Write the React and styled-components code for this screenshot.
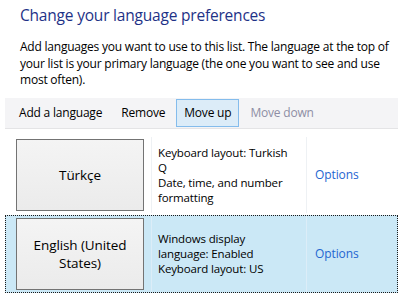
import React from "react";
import styled, { createGlobalStyle } from "styled-components";

const Global = createGlobalStyle`
  html, body { margin: 0; padding: 0; background: #ffffff; }
  body { font-family: "Open Sans", "Noto Sans", sans-serif; color: #000; }
`;

const Page = styled.div`
  width: 398px;
  height: 298px;
  overflow: hidden;
  padding-left: 5px;
  box-sizing: border-box;
`;

const Header = styled.div`
  padding: 4px 0 0 15px;
`;

const Title = styled.h1`
  margin: 0;
  font-weight: 400;
  font-size: 15.5px;
  line-height: 22px;
  color: #1e3287;
  letter-spacing: -0.2px;
`;

const Intro = styled.p`
  margin: 13px 0 0 0;
  font-size: 12px;
  line-height: 16.5px;
  letter-spacing: -0.22px;
  white-space: nowrap;
`;

const Toolbar = styled.div`
  margin-top: 9px;
  height: 31px;
  box-sizing: border-box;
  display: flex;
  align-items: center;
  gap: 3px;
  padding-left: 6px;
  background: #f4f4f6;
  border-bottom: 1px solid #e4e4e6;
`;

const ToolButton = styled.div`
  height: 28px;
  box-sizing: border-box;
  display: flex;
  align-items: center;
  padding: 0 7px;
  font-size: 12px;
  letter-spacing: -0.2px;
  border: 1px solid ${(p) => (p.$active ? "#84bcec" : "transparent")};
  background: ${(p) => (p.$active ? "#dcecf8" : "transparent")};
  color: ${(p) => (p.$disabled ? "#8e8ea4" : "#000")};
`;

const List = styled.div`
  margin-top: 7px;
  display: flex;
  flex-direction: column;
  gap: 1px;
`;

const Row = styled.div`
  height: 78px;
  box-sizing: border-box;
  display: flex;
  align-items: stretch;
  background: ${(p) => (p.$selected ? "#cbe8f6" : "transparent")};
  border: 1px ${(p) => (p.$selected ? "dotted #1a1a1a" : "solid transparent")};
`;

const LangCell = styled.div`
  padding: 2px 7px 2px 10px;
  display: flex;
  align-items: center;
`;

const LangButton = styled.div`
  width: 128px;
  height: 72px;
  box-sizing: border-box;
  border: 1px solid #737373;
  background: linear-gradient(#f4f4f4, #ebebeb);
  display: flex;
  align-items: center;
  justify-content: center;
  text-align: center;
  font-size: 13.5px;
  line-height: 18px;
  letter-spacing: -0.1px;
`;

const Details = styled.div`
  width: 156px;
  box-sizing: border-box;
  border-left: 1px solid ${(p) => (p.$selected ? "#dcedf8" : "#eef1f4")};
  border-right: 1px solid ${(p) => (p.$selected ? "#dcedf8" : "#eef1f4")};
  padding: 0 6px;
  display: flex;
  align-items: center;
  font-size: 11.5px;
  line-height: 15px;
  letter-spacing: -0.15px;
  white-space: nowrap;
`;

const OptionsCell = styled.div`
  padding-left: 8px;
  display: flex;
  align-items: center;
`;

const Link = styled.a`
  color: #1f66d1;
  font-size: 12px;
  letter-spacing: -0.1px;
  text-decoration: none;
`;

const languages = [
  {
    name: ["Türkçe"],
    details: ["Keyboard layout: Turkish", "Q", "Date, time, and number", "formatting"],
  },
  {
    name: ["English (United", "States)"],
    details: ["Windows display", "language: Enabled", "Keyboard layout: US"],
    selected: true,
  },
];

const Lines = ({ lines }) => (
  <div>
    {lines.map((l, i) => (
      <React.Fragment key={i}>
        {i > 0 && <br />}
        {l}
      </React.Fragment>
    ))}
  </div>
);

export default function App() {
  return (
    <>
      <Global />
      <Page>
        <Header>
          <Title>Change your language preferences</Title>
          <Intro>
            Add languages you want to use to this list. The language at the top of
            <br />
            your list is your primary language (the one you want to see and use
            <br />
            most often).
          </Intro>
        </Header>
        <Toolbar>
          <ToolButton>Add a language</ToolButton>
          <ToolButton>Remove</ToolButton>
          <ToolButton $active>Move up</ToolButton>
          <ToolButton $disabled>Move down</ToolButton>
        </Toolbar>
        <List>
          {languages.map((lang, i) => (
            <Row key={i} $selected={lang.selected}>
              <LangCell>
                <LangButton>
                  <Lines lines={lang.name} />
                </LangButton>
              </LangCell>
              <Details $selected={lang.selected}>
                <Lines lines={lang.details} />
              </Details>
              <OptionsCell>
                <Link href="#">Options</Link>
              </OptionsCell>
            </Row>
          ))}
        </List>
      </Page>
    </>
  );
}
